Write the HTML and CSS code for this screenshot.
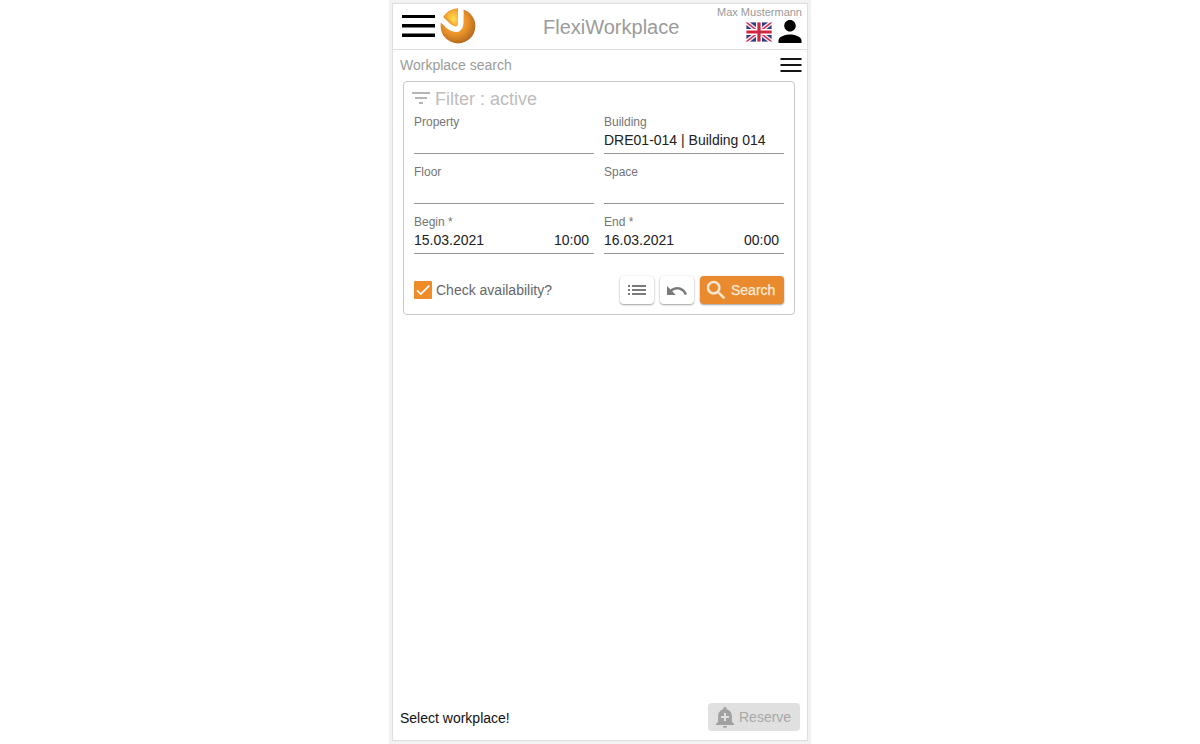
FILE: index.html
```html
<!DOCTYPE html>
<html lang="en">
<head>
<meta charset="utf-8">
<title>FlexiWorkplace</title>
<link rel="stylesheet" href="styles.css">
</head>
<body>
<div class="device">
  <div class="screen">
    <header class="header">
      <div class="brand">
        <svg class="menu-icon" viewBox="0 0 33 22"><path d="M0 0h33v3H0zM0 9h33v3.500H0zM0 18.400h33v3.600H0z"/></svg>
        <svg class="logo" viewBox="0 0 36 36">
          <defs>
            <radialGradient id="ball" cx=".42" cy=".4" r=".68"><stop offset="0" stop-color="#ffad38"/><stop offset=".5" stop-color="#ec942b"/><stop offset="1" stop-color="#a9601a"/></radialGradient>
            <radialGradient id="wedge" cx=".65" cy=".65" r=".75"><stop offset="0" stop-color="#ffdf50"/><stop offset="1" stop-color="#ee9425"/></radialGradient>
          </defs>
          <circle cx="18" cy="18" r="17.400" fill="url(#ball)"/>
          <path d="M-2 8L9 18.500Q20.800 26 20.800 13V-1" fill="none" stroke="#fff" stroke-width="5.600"/>
          <path d="M4.200 7.600Q9.800 1 18 .600V14.500Q18 18 14.500 16.300Z" fill="url(#wedge)"/>
        </svg>
      </div>
      <h1 class="title">FlexiWorkplace</h1>
      <div class="account">
        <div class="user">Max Mustermann</div>
        <div class="account-icons">
          <svg class="flag" viewBox="0 0 26 20">
            <path d="M0 0h26v20H0z" fill="#303c82"/>
            <path d="M0 0l26 20M26 0L0 20" stroke="#f2edf2" stroke-width="4.200"/>
            <path d="M0 0l26 20M26 0L0 20" stroke="#cf3048" stroke-width="1.500"/>
            <path d="M13 0v20M0 10h26" stroke="#fff" stroke-width="6"/>
            <path d="M13 0v20M0 10h26" stroke="#cf2640" stroke-width="3.200"/>
            <path d="M.5.500h25v19H.5z" fill="none" stroke="#fff" stroke-opacity=".4"/>
          </svg>
          <svg class="person" viewBox="4 4 16 16"><path d="M12 12c2.210 0 4-1.790 4-4s-1.790-4-4-4-4 1.790-4 4 1.790 4 4 4zm0 2c-2.670 0-8 1.340-8 4v2h16v-2c0-2.660-5.330-4-8-4z"/></svg>
        </div>
      </div>
    </header>
    <div class="subheader">
      <span>Workplace search</span>
      <svg class="submenu" viewBox="0 0 22 14"><path d="M.5 0h21v2H.5zM.5 6h21v2H.5zM.5 12h21v2H.5z" fill="#151515"/></svg>
    </div>
    <section class="filter">
      <div class="filter-head">
        <svg class="filter-icon" viewBox="3 6 18 12"><path d="M10 18h4v-2h-4v2zM3 6v2h18V6H3zm3 7h12v-2H6v2z" fill="#b5b5b5"/></svg>
        <span>Filter : active</span>
      </div>
      <div class="fields">
        <div class="field"><label>Property</label><div class="value"></div></div>
        <div class="field"><label>Building</label><div class="value"><span>DRE01-014 | Building 014</span></div></div>
        <div class="field"><label>Floor</label><div class="value"></div></div>
        <div class="field"><label>Space</label><div class="value"></div></div>
        <div class="field"><label>Begin *</label><div class="value"><span>15.03.2021</span><span>10:00</span></div></div>
        <div class="field"><label>End *</label><div class="value"><span>16.03.2021</span><span>00:00</span></div></div>
      </div>
      <div class="actions">
        <div class="check">
          <svg class="checkbox" viewBox="0 0 18 18"><rect width="18" height="18" rx="1" fill="#ee8d28"/><path d="M3 9.300L6.800 13.100 15.300 4.600" fill="none" stroke="#fff" stroke-width="1.700"/></svg>
          <span>Check availability?</span>
        </div>
        <div class="buttons">
          <button class="btn icon-btn" aria-label="List"><svg class="list-icon" viewBox="0 0 18 10"><path d="M0 0h2v2H0zM0 4h2v2H0zM0 8h2v2H0zM4 0h14v2H4zM4 4h14v2H4zM4 8h14v2H4z" fill="#7a7a7a"/></svg></button>
          <button class="btn icon-btn" aria-label="Undo"><svg class="undo-icon" viewBox="2 7 20.500 9"><path d="M12.500 8c-2.650 0-5.050.990-6.900 2.600L2 7v9h9l-3.620-3.620c1.390-1.160 3.160-1.880 5.120-1.880 3.540 0 6.550 2.310 7.600 5.500l2.370-.780C21.080 11.030 17.150 8 12.500 8z" fill="#7a7a7a"/></svg></button>
          <button class="btn search-btn"><svg class="search-icon" viewBox="3 3 17.500 17.500"><path d="M15.500 14h-.790l-.280-.270C15.410 12.590 16 11.110 16 9.500 16 5.910 13.090 3 9.500 3S3 5.910 3 9.500 5.910 16 9.500 16c1.610 0 3.090-.590 4.230-1.570l.270.280v.790l5 4.990L20.490 19l-4.990-5zm-6 0C7.010 14 5 11.990 5 9.500S7.010 5 9.500 5 14 7.010 14 9.500 11.990 14 9.500 14z" fill="#fdebd9" stroke="#fdebd9" stroke-width=".4"/></svg><span>Search</span></button>
        </div>
      </div>
    </section>
    <footer class="footer">
      <span class="hint">Select workplace!</span>
      <button class="reserve" disabled><svg class="bell" viewBox="3 2 18 21"><path d="M10.010 21.010c0 1.100.890 1.990 1.990 1.990s1.990-.890 1.990-1.990h-3.980zm8.870-4.190V11c0-3.250-2.250-5.970-5.290-6.690v-.720C13.590 2.710 12.880 2 12 2s-1.590.710-1.590 1.590v.720C7.370 5.030 5.120 7.750 5.120 11v5.820L3 18.940V20h18v-1.060l-2.120-2.120zM16 13.010h-3v3h-2v-3H8V11h3V8h2v3h3v2.010z" fill="#a1a1a1"/></svg><span>Reserve</span></button>
    </footer>
  </div>
</div>
</body>
</html>
```
FILE: styles.css
```css
* { box-sizing: border-box; }
body { margin: 0; background: #fff; font: 14px/16px "Liberation Sans", Arial, sans-serif; color: #212121; }
svg { display: block; flex: none; overflow: visible; }
button { font: inherit; border: 0; padding: 0; }
.device { width: 422px; height: 744px; margin: 0 auto; padding: 3px; background: #f2f2f2; }
.screen { height: 738px; display: flex; flex-direction: column; background: #fff; border: 1px solid #dedede; }
.header { height: 46px; flex: none; display: grid; grid-template-columns: 141px 1fr auto; border-bottom: 1px solid #dedede; padding: 0 5px 0 9px; }
.brand { display: flex; align-items: center; gap: 5px; padding-bottom: 2px; }
.menu-icon { width: 33px; height: 22px; }
.logo { width: 36px; height: 36px; overflow: hidden; border-radius: 50%; }
.title { margin: 0; font-size: 20px; line-height: 46px; font-weight: normal; color: #9b9b9b; }
.account { display: flex; flex-direction: column; align-items: flex-end; }
.user { font-size: 11px; line-height: 16px; color: #999; }
.account-icons { display: flex; gap: 6px; align-items: center; }
.flag { width: 26px; height: 20px; overflow: hidden; }
.person { width: 24px; height: 23px; }
.subheader { height: 31px; flex: none; display: flex; align-items: center; justify-content: space-between; padding: 0 5px 2px 7px; color: #9b9b9b; }
.submenu { width: 22px; height: 14px; }
.filter { height: 234px; flex: none; margin: 0 12px 0 10px; padding: 0 10px; border: 1px solid #c8c8c8; border-radius: 4px; }
.filter-head { height: 32px; display: flex; align-items: center; gap: 5px; margin-left: -2px; font-size: 18px; line-height: 32px; color: #bdbdbd; }
.filter-head span { padding-top: 2px; }
.filter-icon { width: 18px; height: 12px; }
.fields { display: grid; grid-template-columns: 180px 180px; gap: 10px; }
.field { height: 40px; border-bottom: 1px solid #949494; }
.field label { display: block; font-size: 12px; line-height: 16px; color: #757575; }
.value { display: flex; justify-content: space-between; padding-right: 5px; line-height: 20px; }
.actions { display: flex; justify-content: space-between; align-items: center; margin-top: 22px; }
.check { display: flex; align-items: center; gap: 4px; color: #666; }
.checkbox { width: 18px; height: 18px; }
.buttons { display: flex; gap: 6px; }
.btn { height: 28px; display: flex; align-items: center; border-radius: 4px; box-shadow: 0 1px 2px rgba(0,0,0,.36), 0 0 2px rgba(0,0,0,.08); }
.icon-btn { width: 34px; justify-content: center; background: #fff; }
.list-icon { width: 18px; height: 10px; }
.undo-icon { width: 20px; height: 9px; }
.search-btn { width: 84px; padding-left: 7px; gap: 6px; background: #e88a2d; color: #fdebd9; -webkit-text-stroke: .25px #fdebd9; }
.search-icon { width: 18px; height: 18px; }
.footer { margin-top: auto; height: 46px; display: flex; justify-content: space-between; align-items: center; padding: 0 7px; color: #111; }
.hint { padding-top: 2px; }
.reserve { width: 92px; height: 28px; display: flex; align-items: center; gap: 5px; padding-left: 8px; border-radius: 4px; background: #e0e0e0; color: #a8a8a8; }
.bell { width: 18px; height: 21px; }
```
